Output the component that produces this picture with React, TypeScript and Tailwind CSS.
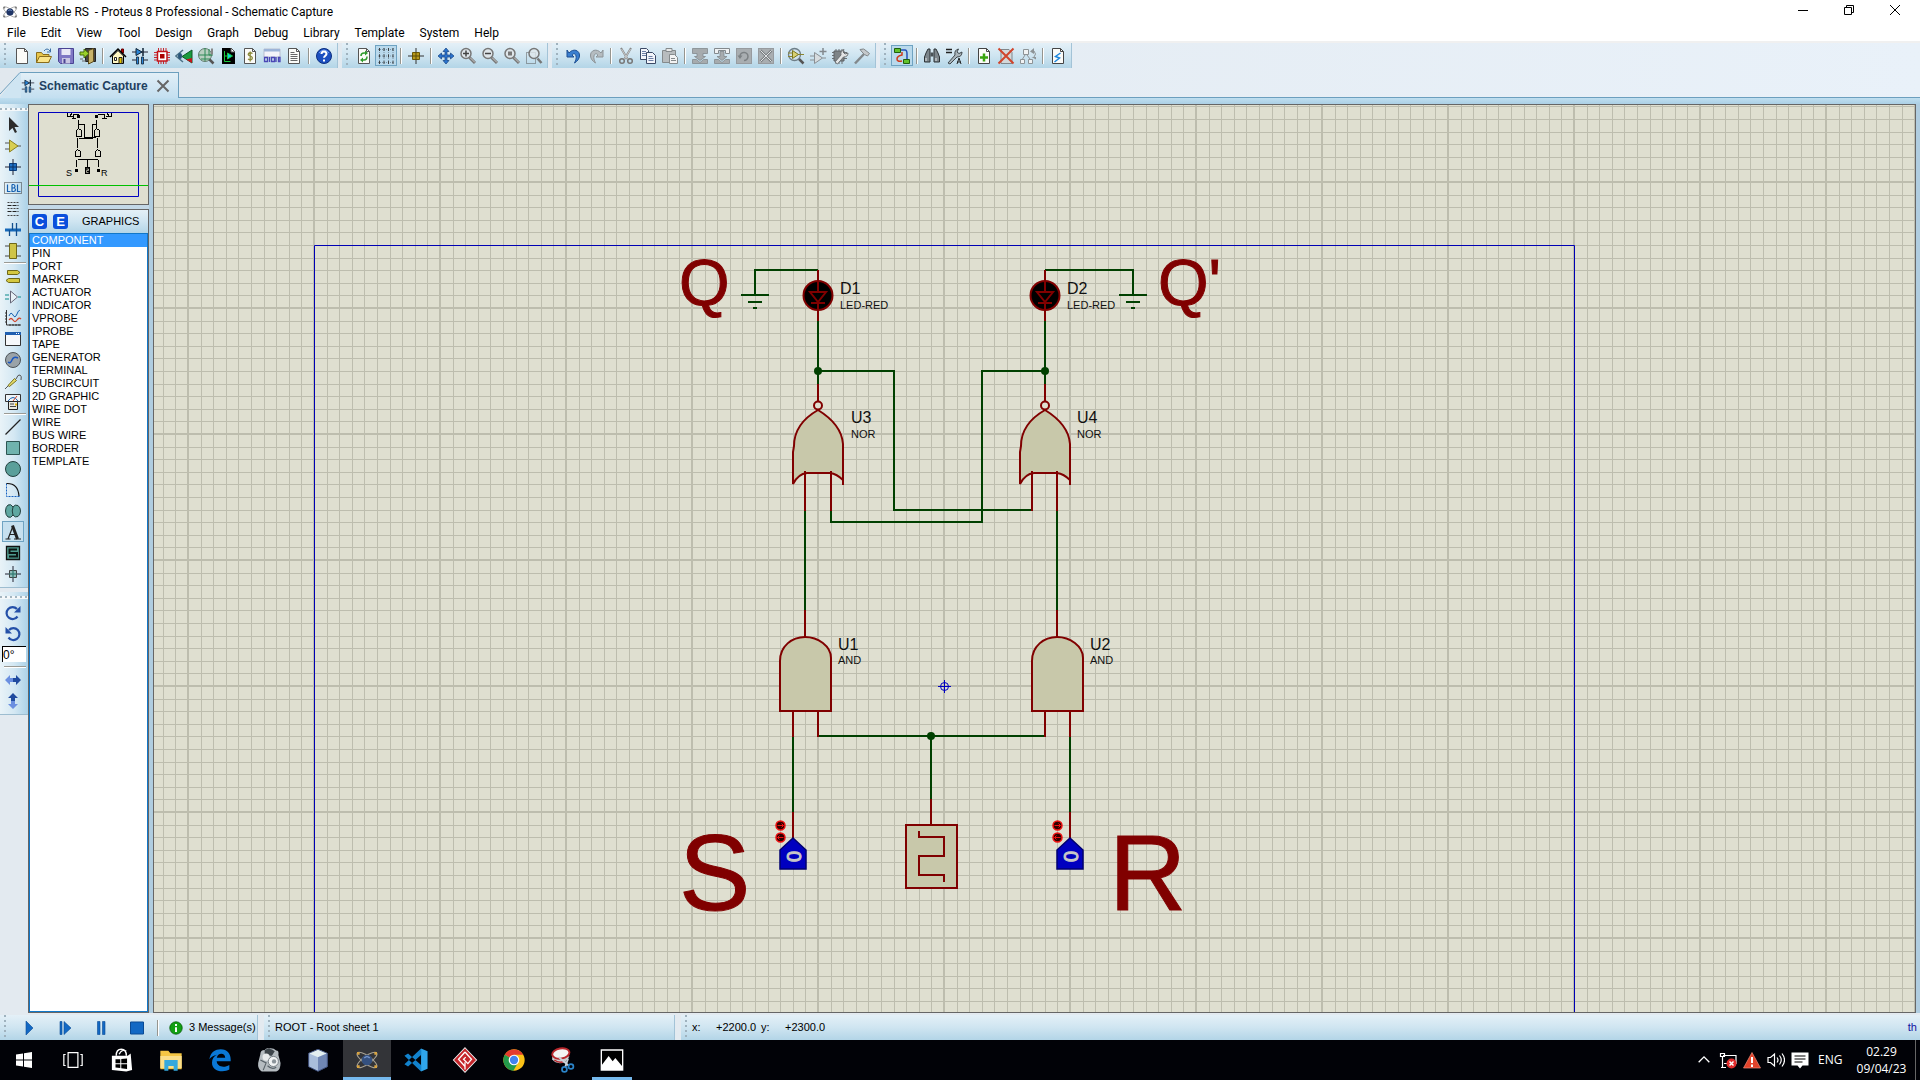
import { Fragment } from "react";
import type { ReactNode } from "react";

/* ---------- icon helpers ---------- */

function Ico({ children, size = 18 }: { children: ReactNode; size?: number }) {
  return (
    <svg width={size} height={size} viewBox="0 0 18 18" fill="none" aria-hidden="true" className="shrink-0">
      {children}
    </svg>
  );
}

const pageOutline = "M3.5 1.5h8l3 3v12h-11z";

function Page({ children, edge = "#555" }: { children?: ReactNode; edge?: string }) {
  return (
    <Ico>
      <path d={pageOutline} fill="#fbfbf8" stroke={edge} />
      <path d="M11.5 1.5v3h3" stroke={edge} />
      {children}
    </Ico>
  );
}

function Magnifier({ children }: { children?: ReactNode }) {
  return (
    <Ico>
      <path d="M10.5 10.5l5.5 5.5" stroke="#777" strokeWidth="3" />
      <path d="M11 10.5l5 5" stroke="#ccc" strokeWidth="1" />
      <circle cx="7" cy="6.500" r="5" fill="#dfe6ea" stroke="#777" strokeWidth="1.500" />
      {children}
    </Ico>
  );
}

function ProteusMark({ size = 16, dark = false }: { size?: number; dark?: boolean }) {
  const orbit = dark ? "#a8a294" : "#8f8f8f";
  const dot = dark ? "#d9a441" : "#7a7a7a";
  return (
    <Ico size={size}>
      <ellipse cx="9" cy="9" rx="9" ry="3" transform="rotate(36 9 9)" stroke={orbit} strokeWidth=".8" />
      <ellipse cx="9" cy="9" rx="9" ry="3" transform="rotate(-36 9 9)" stroke={orbit} strokeWidth=".8" />
      <circle cx="9" cy="9" r="4" fill={dark ? "#34507f" : "#1f3566"} />
      <path d="M7 7.500q2-2 4 0" stroke="#7d9cd0" />
      <path d="M1.500 3h2v2h-2zM14.500 3h2v2h-2zM1.500 13h2v2h-2zM14.500 13h2v2h-2z" fill={dot} />
    </Ico>
  );
}

const schematicGlyph = (
  <>
    <path d="M1 5h16M1 13h4M13 13h4" stroke="#223" />
    <path d="M5 1.500v7l6-3.500z" fill="#2a86d8" stroke="#123" />
    <path d="M12 1v8" stroke="#123" strokeWidth="1.500" />
    <path d="M5.500 10h2v7h-2zM10.500 10h2v7h-2z" fill="#2a86d8" stroke="#123" strokeWidth=".8" />
  </>
);

const curvedArrow = "M4 6C8 1 15 3 14.500 9c-.3 3-2 5-5 7 1.500-3 2-5 1.500-7C10.500 6.500 8.500 6 7 8l2 2H2V3z";

/* ---------- toolbar icon set ---------- */

const icons: Record<string, ReactNode> = {
  "New project": <Page />,
  "Open project": (
    <Ico>
      <path d="M1.500 15.500v-10h5l1.500 2h6v8z" fill="#e8c64a" stroke="#8a6d1c" />
      <path d="M1.500 15.500l3-6h12l-3 6z" fill="#fbe58a" stroke="#8a6d1c" />
      <path d="M9 4q3-4 6 0M15.500 1.500V5H12" stroke="#3b6ea5" />
    </Ico>
  ),
  "Save project": (
    <Ico>
      <path d="M1.500 1.500h15v15h-13l-2-2z" fill="#7f77c4" stroke="#4a4494" />
      <path d="M4.500 2h9v6h-9z" fill="#e9e8f6" />
      <path d="M5 11h8v5.500H5z" fill="#c9c6e2" />
      <path d="M6.500 12h2v4h-2z" fill="#4a4494" />
    </Ico>
  ),
  "Close project": (
    <Ico>
      <path d="M6.500 1.500h10v13h-10z" fill="#444" stroke="#222" />
      <path d="M9.500 3.500l5-2v13l-5 2.500z" fill="#c7b26a" stroke="#5b4b1c" />
      <path d="M1 5h4V2l5 4.500L5 11V8H1z" fill="#9ad12a" stroke="#48700d" />
      <path d="M1 12h3M3 14h4" stroke="#666" />
    </Ico>
  ),
  Home: (
    <Ico>
      <path d="M12.500 3v3h2V2h-2z" fill="#b00" stroke="#600" />
      <path d="M3.500 9v7.500h11V9L9 3.500z" fill="#fff8c4" stroke="#000" />
      <path d="M1 10L9 2l8 8" stroke="#000" strokeWidth="1.500" />
      <path d="M5.500 10.500h2v3h-2z" fill="#fff" stroke="#222" />
      <path d="M10 10.500h3v6h-3z" fill="#e5c400" stroke="#222" />
    </Ico>
  ),
  "Schematic capture": <Ico>{schematicGlyph}</Ico>,
  "PCB layout": (
    <Ico>
      <path d="M5.500 1v16M8 1v16M10.500 1v16M13 1v16M1 5.500h16M1 8h16M1 10.500h16M1 13h16" stroke="#c3151b" strokeWidth=".9" />
      <path d="M4.500 4.500h9.500v9.500H4.500z" fill="#fff" stroke="#c3151b" strokeWidth="1.500" />
      <path d="M7 7h4.500v4.500H7z" fill="#a00" />
    </Ico>
  ),
  "3D visualizer": (
    <Ico>
      <path d="M17 3v13L7 9.500z" fill="#1a9c3f" stroke="#0d5a24" />
      <path d="M17 11v5l-6-3.500z" fill="#c3151b" />
      <path d="M8 3L1 9l7 6" stroke="#4d7286" strokeWidth="1.500" />
      <ellipse cx="5" cy="9" rx="2" ry="3" fill="#2a567a" />
    </Ico>
  ),
  "Gerber viewer": (
    <Ico>
      <circle cx="8" cy="8" r="6.500" fill="#b8cfc0" stroke="#5f7c6c" />
      <path d="M2 8h12M8 1v13M12 2v6h4M4 12h9" stroke="#2f8a56" />
      <path d="M12.500 12.500l4 4" stroke="#555" strokeWidth="2.500" />
      <path d="M15 1.500v6" stroke="#888" strokeWidth="2" />
    </Ico>
  ),
  "Design explorer": (
    <Ico>
      <path d="M3 1h9l4 4v12H3z" fill="#000" />
      <path d="M12 1v4h4z" fill="#fff" stroke="#555" />
      <path d="M5.500 4v10.500h6M5.500 9h3" stroke="#19c93f" />
      <path d="M8.500 6v6l5-3z" fill="#10d0e0" stroke="#19c93f" />
    </Ico>
  ),
  "Bill of materials": (
    <Page>
      <path d="M11.500 6.500q-2.500-1.500-4 0c-1 1.500 1 2 2 2.500s2.500 1.500 1.500 3q-1.500 1.500-4 0M9.200 4.500v10" stroke="#8a8a3a" strokeWidth="1.300" />
    </Page>
  ),
  "Source code": (
    <Ico>
      <path d="M1 2h16v8H1z" fill="#f4f4fa" stroke="#b9bfcf" />
      <path d="M1 2h16v2.500H1z" fill="#9db4d8" />
      <path d="M1.500 10.500h3v4h-3zM6.500 10v5M8.500 10.500h3v4h-3zM13 10v5M15.500 10.500h1.500v4h-1.500z" stroke="#4b47b5" strokeWidth="1.300" />
    </Ico>
  ),
  "Project notes": (
    <Page>
      <path d="M5.500 7.500h7M5.500 9.500h7M5.500 11.500h7M5.500 13.500h7M5.500 5.500h4" stroke="#666" />
    </Page>
  ),
  Help: (
    <Ico>
      <circle cx="9" cy="9" r="7.500" fill="#1c4fc0" stroke="#0c2f80" />
      <path d="M4 6q5-6 10 0" stroke="#6f9af0" />
      <path d="M6.500 7q0-2.500 2.500-2.500T11.500 7c0 1.500-2.500 2-2.500 3.800M9 12.500v2" stroke="#fff" strokeWidth="2" />
    </Ico>
  ),
  "Redraw display": (
    <Page>
      <path d="M6 9q0-3 3-3h2M12 9.500q0 3.500-3 3.500H7" stroke="#2f9a2c" strokeWidth="1.500" />
      <path d="M10 3.500L13 6l-3 2.500zM8 10.500L5 13l3 2.500z" fill="#2f9a2c" />
    </Page>
  ),
  "Toggle grid": (
    <Ico>
      <path d="M2.500 1v16M7 1v16M11.500 1v16M16 1v16M1 2.500h16M1 9h16M1 15.500h16" stroke="#6d8597" strokeWidth=".8" strokeDasharray="1 1" />
      <path d="M2.500 1v3M7 1v3M11.500 1v3M16 1v3M2.500 7.500v3M7 7.500v3M11.500 7.500v3M16 7.500v3M2.500 14v3M7 14v3M11.500 14v3M16 14v3" stroke="#333" strokeWidth=".9" />
    </Ico>
  ),
  "Toggle origin": (
    <Ico>
      <path d="M9 1v16M1 9h16" stroke="#333" />
      <path d="M5.500 5.500h7v7h-7z" fill="#b89a1c" stroke="#6b5808" />
      <path d="M9 5v8M5 9h8" stroke="#5a4a06" />
    </Ico>
  ),
  "Centre at cursor": (
    <Ico>
      <path d="M9 1l3 3.500h-2V8h3.500V6L17 9l-3.500 3v-2H10v3.500h2L9 17l-3-3.500h2V10H4.500v2L1 9l3.500-3v2H8V4.500H6z" fill="#2b74cf" stroke="#12407f" strokeWidth=".7" />
    </Ico>
  ),
  "Zoom in": <Magnifier><path d="M4 6.500h6M7 3.500v6" stroke="#444" strokeWidth="1.500" /></Magnifier>,
  "Zoom out": <Magnifier><path d="M4 6.500h6" stroke="#444" strokeWidth="1.500" /></Magnifier>,
  "Zoom to view entire sheet": <Magnifier><path d="M5 4.500h4v4H5z" fill="#777" /></Magnifier>,
  "Zoom to area": (
    <Ico>
      <path d="M1.500 5.500h9v11h-9z" stroke="#555" strokeDasharray="1 1" />
      <path d="M12.500 11.500l4 4.500" stroke="#777" strokeWidth="2.500" />
      <circle cx="9" cy="6.500" r="5" fill="#dfe6ea" fillOpacity=".8" stroke="#777" strokeWidth="1.500" />
    </Ico>
  ),
  Undo: <Ico><path d={curvedArrow} fill="#3b7fd0" stroke="#1d4f92" /></Ico>,
  Redo: <Ico><path d={curvedArrow} transform="translate(18 0) scale(-1 1)" fill="#b5bcc0" stroke="#8d9498" /></Ico>,
  Cut: (
    <Ico>
      <path d="M4 1l6.500 11M14 1L7.500 12" stroke="#888" strokeWidth="2" />
      <path d="M4.500 2l6 10M13.500 2l-6 10" stroke="#e4e4e4" strokeWidth=".7" />
      <circle cx="5" cy="14" r="2.300" stroke="#777" strokeWidth="1.500" />
      <circle cx="13" cy="14" r="2.300" stroke="#777" strokeWidth="1.500" />
    </Ico>
  ),
  Copy: (
    <Ico>
      <path d="M1.500 1.500h6l2 2v9h-8z" fill="#f4f6fb" stroke="#3c4a66" />
      <path d="M7.500 5.500h6l3 3v8h-9z" fill="#f4f6fb" stroke="#3c4a66" />
      <path d="M3 4.500h4M3 6.500h4M3 8.500h4M9.500 9.500h4M9.500 11.500h5M9.500 13.500h5" stroke="#6d7fa6" />
    </Ico>
  ),
  Paste: (
    <Ico>
      <path d="M1.500 3.500h13v12h-13z" fill="#b8bcbe" stroke="#858a8c" />
      <path d="M5 1.500h6v3H5z" fill="#e8e8e8" stroke="#858a8c" />
      <path d="M8.500 7.500h5l3 3v6h-8z" fill="#f3f3f3" stroke="#858a8c" />
      <path d="M10 11.500h4M10 13.500h5" stroke="#858a8c" />
    </Ico>
  ),
  "Block copy": (
    <Ico>
      <path d="M1.500 1.500h15v5H12v3h2.500L9 13.500 3.500 9.500H6v-3H1.500zM1.500 12.500h4l3.500 3 3.500-3h4v4h-15z" fill="#a6abae" stroke="#83898d" strokeWidth=".8" />
    </Ico>
  ),
  "Block move": (
    <Ico>
      <path d="M1.500 1.500h15v5h-4v-3h-7v3h-4z" fill="#eef1f3" stroke="#83898d" />
      <path d="M7 4.500h4v5h3L9 13.500 4 9.500h3zM1.500 12.500h4l3.500 3 3.500-3h4v4h-15z" fill="#a6abae" stroke="#83898d" strokeWidth=".8" />
    </Ico>
  ),
  "Block rotate": (
    <Ico>
      <path d="M1 1h16v16H1z" fill="#a9aeb1" />
      <path d="M1.500 1.500h15v15h-15z" stroke="#84898c" strokeDasharray="1 1" />
      <path d="M5 9a4 4 0 1 1 4 4.500" stroke="#7c8184" strokeWidth="1.500" />
      <path d="M2.500 8.500h5L5 12z" fill="#7c8184" />
    </Ico>
  ),
  "Block delete": (
    <Ico>
      <path d="M1 1h16v16H1z" fill="#a9aeb1" />
      <path d="M1.500 1.500h15v15h-15z" stroke="#84898c" strokeDasharray="1 1" />
      <path d="M3.500 3.500l11 11M14.500 3.500l-11 11" stroke="#7c8184" strokeWidth="2.500" />
      <path d="M3.500 3.500l11 11M14.500 3.500l-11 11" stroke="#dfe2e4" />
    </Ico>
  ),
  "Pick parts": (
    <Ico>
      <path d="M11.500 11.500l5 5" stroke="#555" strokeWidth="2.500" />
      <circle cx="7.500" cy="7.500" r="6" fill="#cfe0ea" stroke="#6f7f88" strokeWidth="1.300" />
      <path d="M1 6h4M1 9.500h4M10 7.500h7" stroke="#8a8430" />
      <path d="M5.500 3.500v8l6-4z" fill="#d8d070" stroke="#7c7620" />
    </Ico>
  ),
  "Make device": (
    <Ico>
      <path d="M5.500 5.500v11l8-5.500zM1 9h4.500M1 13h4.500M13.500 11H17" stroke="#8a9094" fill="#d7dcdf" />
      <path d="M14 1v7M10.500 4.500h7" stroke="#83898d" strokeWidth="1.500" />
    </Ico>
  ),
  "Packaging tool": (
    <Ico>
      <path d="M5 2v15M8 2v15M11 2v15M1 5.500h15M1 8.500h15M1 11.500h15" stroke="#6c7174" />
      <path d="M3 4h10v10H3z" fill="#7e8487" stroke="#5c6164" />
      <path d="M4 15l6-7q-1-4 3-5.500L12 5l2 2 3-1q0 4-4.500 4L6.500 17z" fill="#e3e5e6" stroke="#6c7174" />
    </Ico>
  ),
  Decompose: (
    <Ico>
      <path d="M2 16.500L11 7" stroke="#82888b" strokeWidth="2.500" />
      <path d="M7 2.500q4-2 7 2l2.500 2-2 2.500-3-1.500L9 5z" fill="#c4c8ca" stroke="#82888b" />
    </Ico>
  ),
  "Wire autorouter": (
    <Ico>
      <path d="M7 3h5q2 0 2 4v5" stroke="#2450b8" strokeWidth="1.500" />
      <path d="M9 5v3q-5 1-5 4t5 2" stroke="#d03a1c" strokeWidth="1.500" />
      <path d="M1.500 1.500h6v4h-6zM10.500 12.500h6v4h-6z" fill="#62c22c" stroke="#1f5f0e" />
    </Ico>
  ),
  "Search and tag": (
    <Ico>
      <path d="M3 6l2-4h2v13H1.500V10zM15 6l-2-4h-2v13h5.500V10z" fill="#7d868c" stroke="#2c3236" />
      <path d="M7.500 5.500h3v4h-3z" fill="#4a5257" />
      <path d="M3 11v3M13 11v3" stroke="#e5e8ea" />
    </Ico>
  ),
  "Property assignment": (
    <Ico>
      <path d="M1 2.500h6M1 5.500h6" stroke="#222" strokeWidth="1.300" />
      <path d="M3 16l7-8q-1-5 3.500-6L12 5l2 1.500 3-1.500q0 5-5 5l-7 7z" fill="#a9b4ba" stroke="#3f474c" />
      <path d="M12 17l2-6 2 6M12 15h4" stroke="#222" />
    </Ico>
  ),
  "New sheet": <Page edge="#444"><path d="M9 6.500v8M5 10.500h8" stroke="#3aa50f" strokeWidth="2.500" /></Page>,
  "Remove sheet": (
    <Ico>
      <path d="M4 2.500h8l3 3v11H4z" fill="#d3d8da" stroke="#81868a" />
      <path d="M1.500 1.500l15 15M16.500 1.500l-15 15" stroke="#d0452c" strokeWidth="2" />
    </Ico>
  ),
  "Exit to parent": (
    <Ico>
      <path d="M4.500 2.500h5v5h-5zM1.500 12.500h4v4h-4zM9.500 12.500h4v4h-4z" fill="#f1f3f4" stroke="#8d9396" />
      <path d="M6 8l-2.500 4M8 8l3 4M15 10q3-3 0-6" stroke="#8d9396" />
      <path d="M11 4.500L15 1v6zM17 12.500L12.500 10H17z" fill="#8d9396" />
    </Ico>
  ),
  "Electrical check": <Page edge="#444"><path d="M11.500 6L6.500 9.500l4 1.500-5 4" stroke="#1c86dc" strokeWidth="1.500" /></Page>,
};

/* ---------- left mode palette ---------- */

const modeIcons: Record<string, ReactNode> = {
  "Selection mode": <Ico><path d="M5 1v14l3.500-3 2.500 5 2-1-2.500-5H15z" fill="#2b2b2b" /></Ico>,
  "Component mode": (
    <Ico>
      <path d="M1 6h6M1 12h6M12 9h5" stroke="#555" />
      <path d="M5.500 3v12L14 9z" fill="#d9cf52" stroke="#8b8222" />
    </Ico>
  ),
  "Junction dot mode": (
    <Ico>
      <path d="M9 1v16M1 9h16" stroke="#223" />
      <path d="M5.500 5.500h7v7h-7z" fill="#1f72c8" stroke="#0d3f7c" />
      <path d="M9 5v8M5 9h8" stroke="#0a2f60" />
    </Ico>
  ),
  "Wire label mode": (
    <Ico>
      <path d="M.5 3.500h17v11H.5z" stroke="#333" strokeDasharray="1 1" />
      <path d="M3.500 5.500v7h3M8 5.500v7h1.500q2 0 2-1.700T9.500 9H8m0 0h1.300q1.700 0 1.700-1.700T9.300 5.500H8M13.500 5.500v7h3" stroke="#1560b0" strokeWidth="1.200" />
    </Ico>
  ),
  "Text script mode": (
    <Ico>
      <path d="M3.500 2.500h11M3.500 8.500h11M3.500 15.500h11" stroke="#444" strokeDasharray="2 1" />
      <path d="M3.500 5.500h11M3.500 11.500h11" stroke="#222" strokeDasharray="4 1" />
    </Ico>
  ),
  "Buses mode": <Ico><path d="M1 9h16" stroke="#1668b8" strokeWidth="3" /><path d="M5.500 9v6M8.500 2v7M12.500 2v13" stroke="#124f8e" strokeWidth="1.300" /></Ico>,
  "Subcircuit mode": (
    <Ico>
      <path d="M1 4h16M1 14h16" stroke="#444" />
      <path d="M5.500 1.500h7v15h-7z" fill="#cfc548" stroke="#6f6818" />
    </Ico>
  ),
  "Terminals mode": (
    <Ico>
      <path d="M3.500 3.500h10l2.500 2-2.500 2h-10zM15.500 11.500h-11l-2.500 2 2.500 2h11z" fill="#d4c840" stroke="#6f6818" />
    </Ico>
  ),
  "Device pins mode": (
    <Ico>
      <path d="M6.500 3v12l7-6z" stroke="#667" fill="#e8f1f6" />
      <path d="M1 7h4M1 11h4M14 9h3" stroke="#0c8a8a" strokeWidth="1.200" />
    </Ico>
  ),
  "Graph mode": (
    <Ico>
      <path d="M2.500 1v15H17M1 4h2M1 7h2M1 10h2M1 13h2M6 15v2M9 15v2M12 15v2M15 15v2" stroke="#333" />
      <path d="M5 7q2-5 4-1t4-1 3-3" stroke="#1560b0" />
      <path d="M5 11q2-3 4 0t4 0 4-1" stroke="#d0452c" strokeWidth="1.300" />
    </Ico>
  ),
  "Active popup mode": (
    <Ico>
      <path d="M1.500 2.500h15v13h-15z" fill="#f6f8fa" stroke="#333" />
      <path d="M1 2h16v3H1z" fill="#1f5fb0" />
      <path d="M12 3.500h4" stroke="#fff" strokeDasharray="1 1" />
    </Ico>
  ),
  "Generator mode": (
    <Ico>
      <circle cx="9" cy="9" r="7.500" fill="#9aa3a8" stroke="#4d5357" />
      <path d="M4 11q2.500 2 4-2t6-2" stroke="#1a57c0" strokeWidth="1.500" />
    </Ico>
  ),
  "Probe mode": (
    <Ico>
      <path d="M1 17l4-4" stroke="#555" />
      <path d="M4 13.500l6.500-7 2 2-7 6z" fill="#e6dd6a" stroke="#77701e" />
      <path d="M12 7q2-5 4-4t1 5" stroke="#555" />
    </Ico>
  ),
  "Instruments mode": (
    <Ico>
      <path d="M1.500 1.500h15v7h-15z" fill="#eef4f8" stroke="#333" />
      <path d="M4 8q5-7 10 0" stroke="#1560b0" />
      <path d="M9 8l4-5" stroke="#d0452c" />
      <path d="M4.500 8.500h9v8h-9z" fill="#e9e9e0" stroke="#222" />
      <path d="M6 11h4M6 13.500h6" stroke="#444" />
      <path d="M11 10.500h2v2h-2z" fill="#e0b000" />
    </Ico>
  ),
  "2D line": <Ico><path d="M1.500 16.500l15-15" stroke="#222" strokeWidth="1.200" /></Ico>,
  "2D box": <Ico><path d="M2.500 2.500h13v13h-13z" fill="#6fb3ae" stroke="#2d5552" /></Ico>,
  "2D circle": <Ico><circle cx="9" cy="9" r="7.500" fill="#5a9f9a" stroke="#23413f" /></Ico>,
  "2D arc": <Ico><path d="M2.500 2.500v13h13" stroke="#1560c0" strokeDasharray="2 1" /><path d="M2.500 2.500Q14 2 15 15" stroke="#111" strokeWidth="1.200" /></Ico>,
  "2D path": (
    <Ico>
      <path d="M9 5Q7 1.500 4 3 1.500 5 1.500 9T4 15q3 1.500 5-2 2 3 5 1.500 2.500-2 2.500-5.500T14 3.500Q11 2 9 5z" fill="#5fa8a2" stroke="#23413f" />
      <path d="M9 5q-1.500 4 0 8" stroke="#23413f" />
    </Ico>
  ),
  "2D text": (
    <Ico>
      <path d="M1.500 16h5M10 16h7" stroke="#222" strokeWidth="1.200" />
      <path d="M4 16L9 3M5.500 11.500H11" stroke="#222" strokeWidth="1.200" />
      <path d="M8.500 2.500L13.500 16" stroke="#222" strokeWidth="3" />
    </Ico>
  ),
  "2D symbol": (
    <Ico>
      <path d="M2.500 2.500h13v13h-13z" fill="#4f9a8e" stroke="#111" strokeWidth="1.300" />
      <path d="M13 5.500H5.500v3.500h7.500v3.500H5" stroke="#0b1412" strokeWidth="2" />
    </Ico>
  ),
  "2D marker": (
    <Ico>
      <path d="M9 1v16M1 9h16" stroke="#223" />
      <path d="M5.500 5.500h7v7h-7z" fill="#7fb3ab" fillOpacity=".8" stroke="#444" />
      <path d="M9 5v8M5 9h8" stroke="#2d7a70" />
    </Ico>
  ),
};

const rotateCw = (
  <>
    <path d="M13.500 12.500a6 6 0 1 1-.5-7.500" stroke="#2450a8" strokeWidth="2.200" />
    <path d="M16.500 2v6.500H10z" fill="#2450a8" />
  </>
);

const flipArrow = (
  <>
    <path d="M1 9l5-5v3h3v4H6v3z" fill="#6b8fe0" />
    <path d="M17 9l-5-5v3H9v4h3v3z" fill="#1f4a9e" />
  </>
);

/* ---------- generic pieces ---------- */

function Grip() {
  return (
    <span className="ml-1 mr-1 w-[3px] self-stretch bg-[radial-gradient(circle_at_1px_1px,#9fb2be_1px,transparent_1px)] bg-[length:3px_5px]" />
  );
}

function HGrip() {
  return (
    <span className="mb-[3px] mt-1 block h-[3px] w-full bg-[radial-gradient(circle_at_1px_1px,#a3b5c0_1px,#f4f8fa_1px)] bg-[length:5px_3px]" />
  );
}

const barFill = "bg-linear-to-b from-[#e4f0f7] via-[#cfe5f1] to-[#b3d5e7]";

function ToolBar({ groups, pressed = [] }: { groups: string[][]; pressed?: string[] }) {
  return (
    <div className={`flex h-[25px] items-center border-r border-[#a3c3d7] pr-0.5 ${barFill}`}>
      <Grip />
      {groups.map((group, i) => (
        <Fragment key={group[0]}>
          {i > 0 && <span className="mx-[3px] h-4 w-[2px] border-l border-r border-l-[#96958f] border-r-white" />}
          {group.map((name) => (
            <button
              key={name}
              type="button"
              aria-label={name}
              title={name}
              className={
                pressed.includes(name)
                  ? "flex h-[21px] w-[22px] items-center justify-center border border-[#6fa3c2] bg-[#b9d9ec]"
                  : "flex h-[21px] w-[22px] items-center justify-center"
              }
            >
              {icons[name]}
            </button>
          ))}
        </Fragment>
      ))}
    </div>
  );
}

const menus = ["File", "Edit", "View", "Tool", "Design", "Graph", "Debug", "Library", "Template", "System", "Help"];

const fileBar = [
  ["New project", "Open project", "Save project", "Close project"],
  ["Home", "Schematic capture", "PCB layout", "3D visualizer", "Gerber viewer", "Design explorer", "Bill of materials", "Source code", "Project notes"],
  ["Help"],
];
const viewBar = [
  ["Redraw display", "Toggle grid"],
  ["Toggle origin"],
  ["Centre at cursor", "Zoom in", "Zoom out", "Zoom to view entire sheet", "Zoom to area"],
];
const editBar = [
  ["Undo", "Redo"],
  ["Cut", "Copy", "Paste"],
  ["Block copy", "Block move", "Block rotate", "Block delete"],
  ["Pick parts", "Make device", "Packaging tool", "Decompose"],
];
const designBar = [
  ["Wire autorouter"],
  ["Search and tag", "Property assignment"],
  ["New sheet", "Remove sheet", "Exit to parent"],
  ["Electrical check"],
];

const modeGroups = [
  ["Selection mode", "Component mode", "Junction dot mode", "Wire label mode", "Text script mode", "Buses mode", "Subcircuit mode"],
  ["Terminals mode", "Device pins mode", "Graph mode", "Active popup mode", "Generator mode", "Probe mode", "Instruments mode"],
  ["2D line", "2D box", "2D circle", "2D arc", "2D path", "2D text", "2D symbol", "2D marker"],
];

const graphics = [
  "COMPONENT", "PIN", "PORT", "MARKER", "ACTUATOR", "INDICATOR", "VPROBE", "IPROBE", "TAPE", "GENERATOR",
  "TERMINAL", "SUBCIRCUIT", "2D GRAPHIC", "WIRE DOT", "WIRE", "BUS WIRE", "BORDER", "TEMPLATE",
];

/* ---------- schematic ---------- */

const MAROON = "#800000";
const GREEN = "#004000";
const BODY = "#c8c8aa";
const PITCH = 12.6;

function GridLines() {
  const cols = Array.from({ length: 320 }, (_, i) => i - 3);
  const rows = Array.from({ length: 200 }, (_, i) => i - 6);
  return (
    <g fill="#bdbdae" shapeRendering="crispEdges">
      {cols.map((k) => (
        <rect key={`c${k}`} x={Math.round(188 + k * PITCH) - (k % 10 === 0 ? 1 : 0)} y="100" width={k % 10 === 0 ? 2 : 1} height="2400" />
      ))}
      {rows.map((k) => (
        <rect key={`r${k}`} x="150" y={Math.round(182 + k * PITCH) - (k % 10 === 0 ? 1 : 0)} width="4000" height={k % 10 === 0 ? 2 : 1} />
      ))}
    </g>
  );
}

function Led({ x }: { x: number }) {
  return (
    <g transform={`translate(${x} 295)`} stroke={MAROON} strokeWidth="2">
      <circle cy=".5" r="14.500" fill="#000" />
      <path d="M0-25V-4M0 7V26" />
      <path d="M-8-3H8L0 7zM-7 8H7" fill="none" />
    </g>
  );
}

function Ground({ x }: { x: number }) {
  return <path d={`M${x - 14} 295h28M${x - 7} 302h14M${x - 2} 308h4`} stroke={GREEN} strokeWidth="2" />;
}

function NorGate({ x }: { x: number }) {
  return (
    <g transform={`translate(${x} 0)`} stroke={MAROON} strokeWidth="2" fill="none">
      <path d="M0 384v18" />
      <circle cy="405.500" r="4" fill="#dfdfd0" />
      <path d="M0 410C-14 418-24 430-24 446L-25 452V484Q-20 474-11 473H12Q19 474 25 480V444C24 430 13 418 0 410z" fill={BODY} />
      <path d="M25 478v7" />
    </g>
  );
}

function AndGate({ x }: { x: number }) {
  return (
    <path
      transform={`translate(${x} 0)`}
      d="M-25 711V661C-25 646-13 637 0 637S26 646 26 658V711z"
      fill={BODY}
      stroke={MAROON}
      strokeWidth="2"
    />
  );
}

function LogicState({ x }: { x: number }) {
  return (
    <g transform={`translate(${x} 0)`}>
      <path d="M0 838l13 12v19h-26v-19z" fill="#0000c0" stroke="#000070" strokeWidth="1.500" />
      <text transform="translate(7.500 856.500) rotate(-90)" textAnchor="middle" fontSize="20" fill="#c8c8c8" stroke="#c8c8c8" strokeWidth="1">
        0
      </text>
      {[825.5, 837.5].map((y, i) => (
        <g key={y} transform={`translate(-12.500 ${y})`}>
          <circle r="4.500" fill="#300000" stroke="#f01010" strokeWidth="1.500" />
          <path d={i === 0 ? "M-3 0h6M1-2l2 2-2 2" : "M3 0h-6M-1-2l-2 2 2 2"} stroke="#f01010" fill="none" />
        </g>
      ))}
    </g>
  );
}

const labels = [
  { x: 840, y: 294, name: "D1", value: "LED-RED", gap: 15 },
  { x: 1067, y: 294, name: "D2", value: "LED-RED", gap: 15 },
  { x: 851, y: 423, name: "U3", value: "NOR", gap: 15 },
  { x: 1077, y: 423, name: "U4", value: "NOR", gap: 15 },
  { x: 838, y: 650, name: "U1", value: "AND", gap: 14 },
  { x: 1090, y: 650, name: "U2", value: "AND", gap: 14 },
];

const wires = [
  "M755 295V270H818",
  "M1045 270H1133V295",
  "M818 321V384",
  "M1045 321V384",
  "M818 371H894V510H1032",
  "M1045 371H982V522H831V511",
  "M805 511V610",
  "M1057 511V610",
  "M793 737V812",
  "M1070 737V812",
  "M818 736H1045",
  "M931 736V800",
];

const pins = [
  "M805 473V511", "M831 473V511", "M1032 473V511", "M1057 473V511",
  "M805 610V637", "M1057 610V637",
  "M793 711V737", "M818 711V737", "M1045 711V737", "M1070 711V737",
  "M793 812V838", "M1070 812V838", "M931 799V825",
];

function Schematic() {
  return (
    <svg
      className="block min-h-0 min-w-0 flex-1 bg-[#dfdfd0] font-['Liberation_Sans',sans-serif]"
      role="img"
      aria-label="RS latch schematic"
    >
      <g transform="translate(-154 -105)">
        <GridLines />
        <path d="M314.500 2000V245.500H1574.500V2000" stroke="#0000b4" fill="none" />
        <g fill="none" strokeWidth="2">
          <path d={wires.join("")} stroke={GREEN} />
          <path d={pins.join("")} stroke={MAROON} />
        </g>
        <Ground x={755} />
        <Ground x={1133} />
        <Led x={818} />
        <Led x={1045} />
        <NorGate x={818} />
        <NorGate x={1045} />
        <AndGate x={805} />
        <AndGate x={1057} />
        <path d="M805 471v6M831 471v6M1032 471v6M1057 471v6" stroke={MAROON} strokeWidth="2" />
        {[[818, 371], [1045, 371], [931, 736]].map(([x, y]) => (
          <circle key={`${x}-${y}`} cx={x} cy={y} r="4" fill={GREEN} />
        ))}
        <g stroke={MAROON} strokeWidth="2">
          <path d="M906 825h51v63h-51z" fill={BODY} />
          <path d="M919 831v6h25v19h-25v19h25v7" fill="none" />
        </g>
        <LogicState x={793} />
        <LogicState x={1070} />
        <g stroke="#0000c0" fill="none">
          <circle cx="944.500" cy="686.500" r="4" />
          <path d="M938 686.500h13M944.500 680v13" />
        </g>
        {labels.map((l) => (
          <g key={l.name} fill="#111">
            <text x={l.x} y={l.y} fontSize="16">{l.name}</text>
            <text x={l.x} y={l.y + l.gap} fontSize="11">{l.value}</text>
          </g>
        ))}
        <g fill={MAROON} stroke={MAROON}>
          <text x="679" y="305" fontSize="65">Q</text>
          <text x="1158" y="305" fontSize="65">Q'</text>
          <text x="679" y="910" fontSize="107">S</text>
          <text x="1109" y="910" fontSize="107">R</text>
        </g>
      </g>
    </svg>
  );
}

function Overview() {
  return (
    <svg
      viewBox="0 0 119 99"
      className="block w-full bg-[#dfdfd0] font-['Liberation_Sans',sans-serif]"
      role="img"
      aria-label="Sheet overview"
    >
      <path d="M9.500 7.500h100v84h-100z" fill="none" stroke="#0000c0" />
      <path d="M0 80.500h119" stroke="#00c000" />
      <g stroke="#000" fill="none" shapeRendering="crispEdges">
        <path d="M38.500 8v3h3l1-3M82.500 8v3h-3l-1-3M42 11l2 1M79 12l-2-1" />
        <path d="M44.500 13v-3.500h5M43 13.500h4M75.500 13v-3.500h-7M73 13.500h5" />
        <path d="M49.500 15v8M67.500 15v8" />
        <path d="M49 19.500h6v13h12M67 19.500h-4v14h-13" />
        <path d="M47.500 31.500v-6l2-2 3 2v6zM65.500 31.500v-6l2-2 3 2v6z" />
        <path d="M48.500 33v10M68.500 33v10" />
        <path d="M46.500 51.500v-5l2-2 3 2v5zM66.500 51.500v-5l2-2 3 2v5z" />
        <path d="M49 54.500h20M47.500 55v7M58.500 54v8M69.500 55v7" />
      </g>
      <path d="M48 10h3v3h-3zM66 10h3v3h-3zM46 64h3v3h-3zM68 64h3v3h-3zM56 62h5v7h-5z" fill="#000" />
      <path d="M57.500 64h2v1.500h-2v2h2" stroke="#dfdfd0" strokeWidth=".7" fill="none" />
      <text x="37" y="71" fontSize="9">S</text>
      <text x="72" y="71" fontSize="9">R</text>
    </svg>
  );
}

/* ---------- taskbar ---------- */

const apps: { name: string; icon: ReactNode; active?: boolean; open?: boolean }[] = [
  { name: "Start", icon: <Ico size={18}><path d="M1 3.500l7-1v6H1zM9 2.300L17 1v7.500H9zM1 9.500h7v6l-7-1zM9 9.500h8V17l-8-1.300z" fill="#fff" /></Ico> },
  { name: "Task view", icon: <Ico size={22}><path d="M5 3h8v12H5zM3 4.500H1.500v9H3M15 4.500h1.500v9H15" stroke="#fff" /></Ico> },
  {
    name: "Store",
    icon: (
      <Ico size={26}>
        <path d="M2 6h11l2-1.500 1 11.500-4 1-10-1z" fill="#fff" />
        <path d="M5 6q0-4.500 3.500-4.500T12 6M7 5q2-4 5-2" stroke="#fff" />
        <path d="M4.500 8.500h3.300v2.700H4.500zM8.500 8.300l4-.3v3.200h-4zM4.500 12h3.300v2.500l-3.300-.3zM8.500 12h4v3.200l-4-.5z" fill="#000" />
      </Ico>
    ),
  },
  {
    name: "File Explorer",
    icon: (
      <Ico size={24}>
        <path d="M1 2h6l1.500 2H17v12H1z" fill="#f5c644" />
        <path d="M1 6h16v9H1z" fill="#fbdf8a" />
        <path d="M4 9h10v8h-3v-3.500H7V17H4z" fill="#35a8dc" />
      </Ico>
    ),
  },
  {
    name: "Edge",
    icon: (
      <Ico size={24}>
        <path d="M1 8.500C2 3 5.500 1 9.500 1c5 0 7.500 3.500 7.500 7.500V10H6.500c.3 2.800 2.500 4 5 4 1.800 0 3-.4 4.500-1.300v3.500c-1.500.8-3.200 1.300-5.200 1.300C6 17.500 3 15 3 11c0-3 1.500-4.800 3.800-6C4 5.500 2.200 6.700 1 8.500zM6.600 7.300h6.300C12.800 5.500 11.700 4.400 10 4.400S7 5.500 6.600 7.300z" fill="#0a78d6" fillRule="evenodd" />
      </Ico>
    ),
  },
  {
    name: "Boxing robot",
    icon: (
      <Ico size={26}>
        <path d="M3 5q0-3 3-3 1-1.500 3-1 3-.5 5 1.500 2 0 1.500 3L17 11q0 5-3 6H4q-3-2-2.500-6z" fill="#b5bcc1" />
        <path d="M6 2q4-2 7 1l-2 3H6z" fill="#3d454b" />
        <circle cx="7" cy="7" r="2.500" fill="#e7eaec" />
        <circle cx="12" cy="10" r="3.500" fill="#f1f3f4" stroke="#6c757c" strokeWidth=".6" />
        <circle cx="12.500" cy="10" r="1.500" fill="#8a939a" />
        <path d="M3 9l4 2-2 5M8 13q3 3 6 1" stroke="#59636a" strokeWidth=".8" />
      </Ico>
    ),
  },
  {
    name: "Cube",
    icon: (
      <Ico size={24}>
        <path d="M9 1l7 3v10l-7 3.500L2 14V4z" fill="#a9bedb" />
        <path d="M9 1l7 3-7 3-7-3z" fill="#e3eff0" />
        <path d="M9 7l7-3v10l-7 3.500z" fill="#7087b4" />
        <path d="M9 1l7 3v10l-7 3.500L2 14V4z" stroke="#3d4f7c" strokeWidth=".7" />
      </Ico>
    ),
  },
  { name: "Proteus", icon: <ProteusMark size={24} dark />, active: true },
  {
    name: "Visual Studio Code",
    icon: (
      <Ico size={26}>
        <path d="M12.500 1L17 3v12l-4.500 2z" fill="#2fa5ea" />
        <path d="M12.500 1v4.500L3.500 13.500 1 12zM12.500 17v-4.500L3.500 4.500 1 6z" fill="#1282cc" />
      </Ico>
    ),
  },
  {
    name: "Diagram tool",
    icon: (
      <Ico size={26}>
        <path d="M9 .5L17 9l-8 8.500L1 9z" fill="#c5262b" stroke="#eee" strokeWidth=".7" />
        <path d="M9 3.500L4.500 8.500 9 13.500M9 3.500l4.500 5L11 11.500 8 8.500l1.500-1.500M9 10.500v5" stroke="#fff" strokeWidth=".9" />
      </Ico>
    ),
  },
  {
    name: "Chrome",
    icon: (
      <Ico size={24}>
        <circle cx="9" cy="9" r="8" fill="#fbc116" />
        <path d="M9 9L2.100 5A8 8 0 0 1 15.900 5H9z" fill="#e33b2e" />
        <path d="M9 9L2.100 5A8 8 0 0 0 8.500 17l3.500-6z" fill="#229a4a" />
        <circle cx="9" cy="9" r="4" fill="#fff" />
        <circle cx="9" cy="9" r="3.100" fill="#4283ee" />
      </Ico>
    ),
  },
  {
    name: "Snipping Tool",
    icon: (
      <Ico size={26}>
        <path d="M1.500 4.500v4q3 4 9 2l3-4z" fill="#c9cdd0" />
        <ellipse cx="7.500" cy="4.500" rx="6" ry="3.500" fill="#f3f3f3" stroke="#b9272c" strokeWidth="1.300" transform="rotate(-10 7.500 4.500)" />
        <path d="M3 9q3 2.500 7 1" stroke="#b9272c" />
        <path d="M6 7l7 6M12.500 8l-2 6" stroke="#c9d3da" strokeWidth="1.300" />
        <circle cx="10" cy="15.500" r="1.700" stroke="#2b84c8" strokeWidth="1.200" />
        <circle cx="14.500" cy="13.500" r="1.700" stroke="#2b84c8" strokeWidth="1.200" />
      </Ico>
    ),
  },
  {
    name: "Photos",
    icon: (
      <Ico size={24}>
        <path d="M1 1.500h16v15H1z" fill="#000" stroke="#fff" />
        <path d="M1.500 16.500v-4l5-6.500 3 4 2-2.500 5 6v3z" fill="#fff" />
      </Ico>
    ),
    open: true,
  },
];

const trayIcons: { name: string; icon: ReactNode }[] = [
  { name: "Show hidden icons", icon: <Ico size={16}><path d="M3 11.500l6-6 6 6" stroke="#fff" strokeWidth="1.500" /></Ico> },
  {
    name: "Network",
    icon: (
      <Ico size={18}>
        <path d="M4 4.500h13v8H5M1.500 2.500h4v3h-4zM3.500 5.500V16M2 16.500h5" stroke="#fff" strokeWidth="1.200" />
        <circle cx="12.500" cy="12.500" r="5" fill="#e02c2c" />
        <path d="M10.500 10.500l4 4M14.500 10.500l-4 4" stroke="#fff" strokeWidth="1.500" />
      </Ico>
    ),
  },
  {
    name: "Warning",
    icon: (
      <Ico size={18}>
        <path d="M9 1.500L17.500 17H.5z" fill="#e2432a" stroke="#f08b78" strokeWidth=".7" />
        <path d="M9 6v6M9 13.500V16" stroke="#fff" strokeWidth="2" />
      </Ico>
    ),
  },
  {
    name: "Volume",
    icon: (
      <Ico size={18}>
        <path d="M1 6.500h2.500L7.500 3v12l-4-3.500H1zM10 6.500q2 2.500 0 5M12.500 4.500q3.500 4.500 0 9M15 2.500q5 6.500 0 13" stroke="#fff" strokeWidth="1.200" />
      </Ico>
    ),
  },
  {
    name: "Action center",
    icon: (
      <Ico size={18}>
        <path d="M.5 1.500h17v13h-6L9 17.500 6.500 14.500h-6z" fill="#fff" />
        <path d="M3.500 5h11M3.500 8h11M3.500 11h8" stroke="#000" strokeWidth="1.200" />
      </Ico>
    ),
  },
];

const simButtons: { name: string; icon: ReactNode }[] = [
  { name: "Run", icon: <path d="M6 2v14l7-7z" fill="#1268c4" stroke="#0a4a94" strokeWidth=".6" /> },
  { name: "Step", icon: <path d="M4 2.500h2v13H4zM8 2.500v13L15 9z" fill="#1268c4" stroke="#0a4a94" strokeWidth=".6" /> },
  { name: "Pause", icon: <path d="M5.500 2.500h2.500v13H5.500zM10.500 2.500H13v13h-2.500z" fill="#1268c4" stroke="#0a4a94" strokeWidth=".6" /> },
  { name: "Stop", icon: <path d="M2.500 3h13v12h-13z" fill="#1268c4" stroke="#0a4a94" /> },
];

export default function App() {
  return (
    <div className="flex min-h-screen flex-col bg-[#e3eaf0] font-['Liberation_Sans',Arial,sans-serif] text-[11px] leading-[13px] text-black">
      {/* title bar */}
      <header className="flex h-6 items-start bg-white pl-0.5 pr-0.5 pt-1 font-['Roboto','Open_Sans',sans-serif]">
        <ProteusMark />
        <h1 className="ml-1 flex-1 whitespace-pre text-xs leading-4">Biestable RS  - Proteus 8 Professional - Schematic Capture</h1>
        <div className="flex">
          <button type="button" aria-label="Minimize" className="flex w-[46px] justify-center">
            <svg width="12" height="12" fill="none"><path d="M1 6.500h10" stroke="#000" /></svg>
          </button>
          <button type="button" aria-label="Restore" className="flex w-[46px] justify-center">
            <svg width="12" height="12" fill="none"><path d="M1.500 3.500h7v7h-7zM3.500 3.500v-2h7v7h-2" stroke="#000" /></svg>
          </button>
          <button type="button" aria-label="Close" className="flex w-[46px] justify-center">
            <svg width="12" height="12" fill="none"><path d="M1 1l10 10M11 1L1 11" stroke="#000" /></svg>
          </button>
        </div>
      </header>

      {/* menu bar */}
      <nav className="flex h-[17px] items-center gap-[15px] bg-white pl-[7px] font-['Roboto','Open_Sans',sans-serif] text-xs leading-4">
        {menus.map((m) => (
          <button key={m} type="button">{m}</button>
        ))}
      </nav>

      {/* tool bars */}
      <div className="flex gap-1 border-t-2 border-[#f0f0f0] bg-linear-to-r from-[#e1e8ee] to-[#e9f1f9]">
        <ToolBar groups={fileBar} />
        <ToolBar groups={viewBar} pressed={["Toggle grid"]} />
        <ToolBar groups={editBar} />
        <ToolBar groups={designBar} pressed={["Wire autorouter"]} />
      </div>

      {/* document tabs */}
      <div className="flex h-[30px] items-end border-b border-[#6c9fbe] bg-linear-to-r from-[#e1e8ee] to-[#e9f1f9]">
        <div className="-mb-px flex h-[26px] items-stretch">
          <svg width="21" height="26" fill="none" aria-hidden="true">
            <path d="M0 25L20 .5H21V26H0z" fill="#cfe5f2" />
            <path d="M0 22L20 .5H21" stroke="#6c9fbe" />
          </svg>
          <div className="flex items-center gap-1 border-r border-t border-[#6c9fbe] bg-linear-to-b from-[#e2eff7] to-[#c3dff0] pr-2">
            <Ico size={14}>{schematicGlyph}</Ico>
            <span className="text-xs font-bold text-[#1f4060]">Schematic Capture</span>
            <button type="button" aria-label="Close tab" className="ml-1">
              <svg width="14" height="14" fill="none" className="block"><path d="M1.500 1.500l11 11M12.500 1.500l-11 11" stroke="#666" strokeWidth="2" /></svg>
            </button>
          </div>
        </div>
      </div>
      <div className="h-1.5 bg-linear-to-b from-[#bfdff0] to-[#acd0e5]" />

      {/* work area */}
      <main className="flex flex-1">
        <div className="flex w-7 flex-col">
          <div className="flex flex-col items-start border-b border-[#9dbdd0] bg-linear-to-r from-[#e9f3f8] via-[#d4e8f3] to-[#acd2e8] pb-[3px]">
            <HGrip />
            {modeGroups.map((group, i) => (
              <Fragment key={group[0]}>
                {i > 0 && <span className="my-px ml-1 h-[2px] w-[22px] border-b border-t border-b-white border-t-[#9a9a94]" />}
                {group.map((name) => (
                  <button
                    key={name}
                    type="button"
                    aria-label={name}
                    title={name}
                    className={
                      name === "2D text"
                        ? "ml-0.5 flex h-[21px] w-[22px] items-center justify-center border border-[#6fa3c2] bg-[#c6e0ef]"
                        : "ml-0.5 flex h-[21px] w-[22px] items-center justify-center"
                    }
                  >
                    {modeIcons[name]}
                  </button>
                ))}
              </Fragment>
            ))}
          </div>
          <div className="mt-1 flex flex-col items-start border-b border-[#9dbdd0] bg-linear-to-r from-[#e9f3f8] via-[#d4e8f3] to-[#acd2e8] pb-[3px]">
            <HGrip />
            <button type="button" aria-label="Rotate clockwise" className="ml-0.5 flex h-[21px] w-[22px] items-center justify-center">
              <Ico>{rotateCw}</Ico>
            </button>
            <button type="button" aria-label="Rotate anti-clockwise" className="ml-0.5 flex h-[21px] w-[22px] items-center justify-center">
              <Ico><g transform="translate(18 0) scale(-1 1)">{rotateCw}</g></Ico>
            </button>
            <input
              aria-label="Rotation angle"
              defaultValue="0°"
              className="ml-0.5 mt-0.5 h-4 w-6 border-l border-t border-black bg-white text-xs leading-3 outline-none"
            />
            <span className="mb-px ml-1 mt-1 h-[2px] w-[22px] border-b border-t border-b-white border-t-[#9a9a94]" />
            <button type="button" aria-label="Mirror horizontally" className="ml-0.5 flex h-[21px] w-[22px] items-center justify-center">
              <Ico>{flipArrow}</Ico>
            </button>
            <button type="button" aria-label="Mirror vertically" className="ml-0.5 flex h-[21px] w-[22px] items-center justify-center">
              <Ico><g transform="rotate(-90 9 9)">{flipArrow}</g></Ico>
            </button>
          </div>
        </div>

        <aside className="flex w-[121px] flex-col gap-1 bg-[#c3d8e6]">
          <div className="border border-[#666] bg-[#dfdfd0]">
            <Overview />
          </div>
          <section className="flex flex-1 flex-col border border-[#666] bg-[#1177c8]">
            <div className={`flex h-[23px] items-center gap-1.5 pl-[3px] ${barFill}`}>
              <button type="button" aria-label="Create graphic style" className="h-[15px] w-[15px] rounded-[3px] bg-[#0a4fdc] text-[13px] font-bold leading-[15px] text-white">C</button>
              <button type="button" aria-label="Edit graphic style" className="h-[15px] w-[15px] rounded-[3px] bg-[#0a4fdc] text-[13px] font-bold leading-[15px] text-white">E</button>
              <h2 className="ml-2 whitespace-nowrap">GRAPHICS</h2>
            </div>
            <ul className="m-px flex-1 bg-white">
              {graphics.map((g, i) => (
                <li key={g} className={i === 0 ? "h-[13px] bg-[#3399ff] pl-0.5 text-white" : "h-[13px] pl-0.5"}>
                  {g}
                </li>
              ))}
            </ul>
          </section>
        </aside>

        <div className="flex flex-1 border-x-4 border-[#b0cde0]">
          <div className="flex flex-1 border border-[#666]">
            <Schematic />
          </div>
        </div>
      </main>

      {/* status bar */}
      <footer className="mt-0.5 flex h-[25px] items-stretch gap-1.5">
        <div className={`flex w-[258px] items-center border-r border-[#a3c3d7] ${barFill}`}>
          <Grip />
          <div className="flex">
            {simButtons.map((b) => (
              <button key={b.name} type="button" aria-label={b.name} className="flex w-9 items-center justify-center">
                <Ico>{b.icon}</Ico>
              </button>
            ))}
          </div>
          <span className="mx-0.5 h-4 w-[2px] border-l border-r border-l-[#96958f] border-r-white" />
          <button type="button" className="ml-2 flex flex-1 items-center gap-1.5 whitespace-nowrap">
            <Ico size={14}>
              <circle cx="9" cy="9" r="8" fill="#12a012" stroke="#085c08" />
              <path d="M9 8v6M9 4v2.500" stroke="#fff" strokeWidth="2.500" />
            </Ico>
            3 Message(s)
          </button>
        </div>
        <div className={`flex w-[411px] items-center border-r border-[#a3c3d7] ${barFill}`}>
          <Grip />
          <span>ROOT - Root sheet 1</span>
        </div>
        <div className={`flex flex-1 items-center ${barFill}`}>
          <Grip />
          <span className="w-6">x:</span>
          <span className="w-[45px]">+2200.0</span>
          <span className="w-6">y:</span>
          <span>+2300.0</span>
          <span className="ml-auto pr-[3px] text-[#1010a0]">th</span>
        </div>
      </footer>

      {/* desktop taskbar */}
      <div className="flex h-10 items-stretch bg-[#010207] font-['Open_Sans','Noto_Sans',sans-serif] text-xs leading-4 text-white">
        <div className="flex gap-px">
          {apps.map((a) => (
            <button
              key={a.name}
              type="button"
              aria-label={a.name}
              title={a.name}
              className={
                a.active
                  ? "flex w-12 items-center justify-center border-b-3 border-[#76b9ed] bg-[#333438] pt-[3px]"
                  : "flex w-12 items-center justify-center"
              }
            >
              {a.open ? (
                <span className="flex h-full w-10 items-center justify-center border-b-3 border-[#76b9ed] pt-[3px]">{a.icon}</span>
              ) : (
                a.icon
              )}
            </button>
          ))}
        </div>
        <div className="ml-auto flex items-center">
          {trayIcons.map((t) => (
            <button key={t.name} type="button" aria-label={t.name} title={t.name} className="flex w-6 items-center justify-center">
              {t.icon}
            </button>
          ))}
          <span className="ml-1.5 w-6">ENG</span>
          <time className="w-[73px] pl-1.5 text-center leading-[17px]">
            02.29
            <br />
            09/04/23
          </time>
          <span className="mr-1 h-full w-px bg-[#666]" />
        </div>
      </div>
    </div>
  );
}
